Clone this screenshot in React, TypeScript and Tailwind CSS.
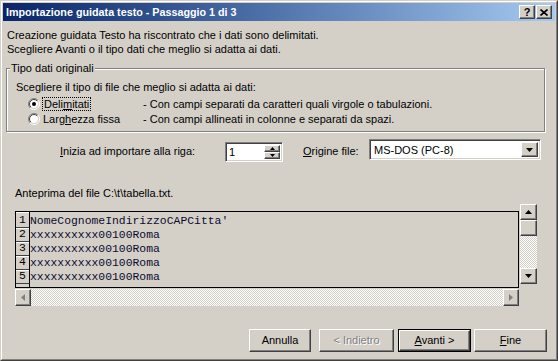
import type { ReactNode } from 'react';

const raised =
  'border border-t-white border-l-white border-r-[#404040] border-b-[#404040] shadow-[inset_-1px_-1px_0_#808080] bg-[#d4d0c8]';
const sunken =
  'border border-t-[#808080] border-l-[#808080] border-r-white border-b-white shadow-[inset_1px_1px_0_#404040,inset_-1px_-1px_0_#d4d0c8] bg-white';

function Tri({ dir, size = 7, color = '#000' }: { dir: 'up' | 'down' | 'left' | 'right'; size?: number; color?: string }) {
  const h = Math.ceil(size / 2);
  if (dir === 'up' || dir === 'down') {
    const pts = dir === 'up' ? `0,${h} ${size},${h} ${size / 2},0` : `0,0 ${size},0 ${size / 2},${h}`;
    return (
      <svg width={size} height={h} viewBox={`0 0 ${size} ${h}`}>
        <polygon points={pts} fill={color} />
      </svg>
    );
  }
  const pts = dir === 'left' ? `${h},0 ${h},${size} 0,${size / 2}` : `0,0 0,${size} ${h},${size / 2}`;
  return (
    <svg width={h} height={size} viewBox={`0 0 ${h} ${size}`}>
      <polygon points={pts} fill={color} />
    </svg>
  );
}

function Radio({ checked }: { checked?: boolean }) {
  return (
    <svg width="12" height="12" viewBox="0 0 12 12" className="shrink-0">
      <defs>
        <linearGradient id="ro" x1="0" y1="0" x2="1" y2="1">
          <stop offset="0.5" stopColor="#808080" />
          <stop offset="0.5" stopColor="#ffffff" />
        </linearGradient>
        <linearGradient id="ri" x1="0" y1="0" x2="1" y2="1">
          <stop offset="0.5" stopColor="#404040" />
          <stop offset="0.5" stopColor="#d4d0c8" />
        </linearGradient>
      </defs>
      <circle cx="6" cy="6" r="5.5" fill="none" stroke="url(#ro)" />
      <circle cx="6" cy="6" r="4.5" fill="#fff" stroke="url(#ri)" />
      {checked && <circle cx="6" cy="6" r="2" fill="#000" />}
    </svg>
  );
}

function Btn({ children, w, extra = '' }: { children: ReactNode; w: string; extra?: string }) {
  return <div className={`${raised} ${w} h-[23px] flex items-center justify-center ${extra}`}>{children}</div>;
}

const rows = ["NomeCognomeIndirizzoCAPCitta'", 'xxxxxxxxxx00100Roma', 'xxxxxxxxxx00100Roma', 'xxxxxxxxxx00100Roma', 'xxxxxxxxxx00100Roma'];

export default function App() {
  return (
    <div className="w-[558px] h-[361px] font-['Liberation_Sans',Arial,sans-serif] text-[11px] text-black bg-[#d4d0c8] border border-t-[#d4d0c8] border-l-[#d4d0c8] border-r-[#404040] border-b-[#404040]">
      <div className="h-full border border-t-white border-l-white border-r-[#808080] border-b-[#808080] p-[1px] flex flex-col">
        {/* title bar */}
        <div className="h-[18px] flex items-center bg-linear-to-r from-[#0a246a] to-[#a6caf0] pl-[3px] pr-[3px]">
          <span className="text-white font-bold text-[10.75px] leading-none">Importazione guidata testo - Passaggio 1 di 3</span>
          <div className="ml-auto flex gap-[1px]">
            <div className={`${raised} w-[16px] h-[14px] flex items-center justify-center font-bold text-[11px] leading-none`}>?</div>
            <div className={`${raised} w-[16px] h-[14px] flex items-center justify-center`}>
              <svg width="8" height="7" viewBox="0 0 8 7">
                <path d="M0.5 0.5 L7.5 6.5 M7.5 0.5 L0.5 6.5" stroke="#000" strokeWidth="1.6" />
              </svg>
            </div>
          </div>
        </div>

        <div className="mt-[7px] pl-[4px] leading-[14px]">
          <div>Creazione guidata Testo ha riscontrato che i dati sono delimitati.</div>
          <div>Scegliere Avanti o il tipo dati che meglio si adatta ai dati.</div>
        </div>

        {/* group box */}
        <div className="relative mt-[12px] ml-[3px] w-[539px] h-[64px] border border-[#808080] shadow-[inset_1px_1px_0_#fff,1px_1px_0_#fff] pl-[9px] pt-[11px] leading-[14px]">
          <span className="absolute -top-[8px] left-[3px] bg-[#d4d0c8] px-[1px] leading-[14px]">Tipo dati originali</span>
          <div>Scegliere il tipo di file che meglio si adatta ai dati:</div>
          <div className="mt-[2px] pl-[12px] flex items-center h-[15px]">
            <Radio checked />
            <div className="w-[101px] ml-[2px] flex">
              <span className="border border-dotted border-black px-[1px] leading-[12px]">
                Deli<u>m</u>itati
              </span>
            </div>
            <span>- Con campi separati da caratteri quali virgole o tabulazioni.</span>
          </div>
          <div className="pl-[12px] flex items-center h-[15px]">
            <Radio />
            <div className="w-[100px] ml-[3px]">
              Larg<u>h</u>ezza fissa
            </div>
            <span>- Con campi allineati in colonne e separati da spazi.</span>
          </div>
        </div>

        {/* start row / origin */}
        <div className="mt-[7px] h-[22px] flex items-start">
          <div className="ml-[57px] w-[165px] mt-[5px] leading-[14px]">
            <u>I</u>nizia ad importare alla riga:
          </div>
          <div className={`${sunken} mt-[3px] w-[58px] h-[20px] flex items-stretch p-[2px]`}>
            <div className="flex-1 pl-[1px] leading-[15px]">1</div>
            <div className="w-[16px] flex flex-col">
              <div className={`${raised} h-[8px] flex items-center justify-center`}>
                <Tri dir="up" size={5} />
              </div>
              <div className={`${raised} h-[8px] flex items-center justify-center`}>
                <Tri dir="down" size={5} />
              </div>
            </div>
          </div>
          <div className="ml-[20px] w-[66px] mt-[5px] leading-[14px]">
            <u>O</u>rigine file:
          </div>
          <div className={`${sunken} w-[172px] h-[21px] flex items-stretch p-[2px]`}>
            <div className="flex-1 pl-[2px] leading-[16px]">MS-DOS (PC-8)</div>
            <div className={`${raised} w-[17px] flex items-center justify-center`}>
              <Tri dir="down" size={7} />
            </div>
          </div>
        </div>

        <div className="mt-[25px] ml-[12px] leading-[14px]">Anteprima del file C:\t\tabella.txt.</div>

        {/* preview */}
        <div className="mt-[4px] ml-[12px] flex items-start">
          <div className="w-[504px] flex flex-col">
            <div className="mt-[7px] h-[77px] border border-black flex">
              <div className="w-[14px] border-r border-black flex flex-col">
                {rows.map((_, i) => (
                  <div
                    key={i}
                    className={`${i === 0 ? 'h-[16px]' : 'h-[14px]'} border-b border-[#404040] shadow-[inset_0_1px_0_#fff] flex items-end justify-center font-['Liberation_Mono',monospace] text-[11.4px] leading-[13px]`}
                  >
                    {i + 1}
                  </div>
                ))}
              </div>
              <div className="flex-1 flex flex-col font-['Liberation_Mono','Courier_New',monospace] text-[11.4px] text-[#0c0c30]">
                {rows.map((r, i) => (
                  <div key={i} className={`${i === 0 ? 'h-[16px]' : 'h-[14px]'} flex items-end leading-[13px] whitespace-pre`}>
                    {r}
                  </div>
                ))}
              </div>
            </div>
            <div className="mt-[1px] h-[17px] flex bg-[repeating-conic-gradient(#ffffff_0%_25%,#d4d0c8_0%_50%)] bg-[length:2px_2px]">
              <div className={`${raised} w-[16px] flex items-center justify-center`}>
                <Tri dir="left" size={7} color="#808080" />
              </div>
              <div className="flex-1" />
              <div className={`${raised} w-[16px] flex items-center justify-center`}>
                <Tri dir="right" size={7} color="#808080" />
              </div>
            </div>
          </div>
          <div className="ml-[1px] w-[17px] h-[80px] flex flex-col bg-[repeating-conic-gradient(#ffffff_0%_25%,#d4d0c8_0%_50%)] bg-[length:2px_2px]">
            <div className={`${raised} h-[16px] flex items-center justify-center`}>
              <Tri dir="up" size={7} />
            </div>
            <div className={`${raised} h-[16px]`} />
            <div className="flex-1" />
            <div className={`${raised} h-[16px] flex items-center justify-center`}>
              <Tri dir="down" size={7} />
            </div>
          </div>
        </div>

        {/* buttons */}
        <div className="mt-[23px] ml-[246px] flex">
          <Btn w="w-[62px]">Annulla</Btn>
          <Btn w="w-[75px]" extra="ml-[8px] text-[#808080] [text-shadow:1px_1px_0_#fff]">
            &lt; Indietro
          </Btn>
          <div className="ml-[4px] w-[73px] h-[23px] border border-black">
            <div className="h-full border border-t-white border-l-white border-r-[#404040] border-b-[#404040] shadow-[inset_-1px_-1px_0_#808080] flex items-center justify-center">
              <span>
                <u>A</u>vanti &gt;
              </span>
            </div>
          </div>
          <Btn w="w-[73px]" extra="ml-[3px]">
            <span>
              <u>F</u>ine
            </span>
          </Btn>
        </div>
      </div>
    </div>
  );
}
